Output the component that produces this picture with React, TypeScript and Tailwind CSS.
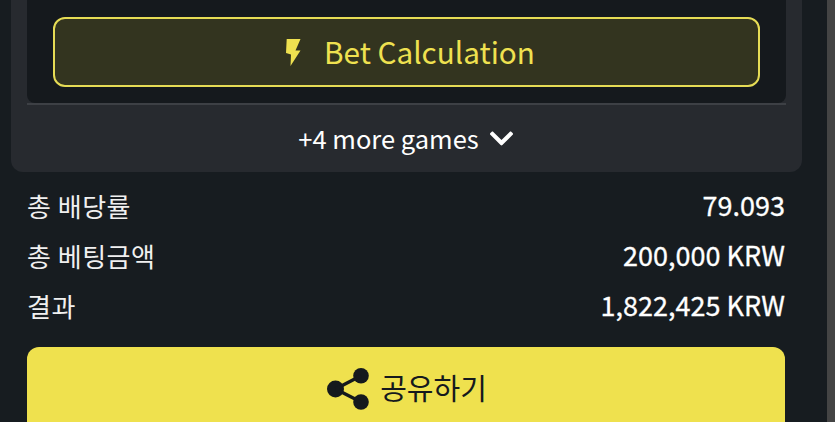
import { FaChevronDown } from 'react-icons/fa';

const font = { fontFamily: '"Noto Sans CJK KR", "Noto Sans", sans-serif' };

const summary = [
  { label: '총 배당률', value: '79.093' },
  { label: '총 베팅금액', value: '200,000 KRW' },
  { label: '결과', value: '1,822,425 KRW' },
];

function BoltIcon() {
  return (
    <svg width="15" height="27" viewBox="0 0 15 27" fill="currentColor" aria-hidden="true">
      <path d="M0.7 0H14.5L9.5 11.5H14.5L4.5 27L5 15.5L0 14Z" />
    </svg>
  );
}

function ShareIcon() {
  return (
    <svg width="42" height="42" viewBox="0 0 42 42" fill="currentColor" aria-hidden="true">
      <circle cx="8.5" cy="21" r="8.5" />
      <circle cx="34" cy="7.8" r="7.8" />
      <circle cx="34" cy="34" r="7.8" />
      <path d="M8.5 21L34 7.8M8.5 21L34 34" stroke="currentColor" strokeWidth="3.5" fill="none" />
    </svg>
  );
}

export default function App() {
  return (
    <div style={font} className="flex h-[422px] w-[835px] overflow-hidden bg-[#171c20]">
      <div className="min-w-0 flex-1">
        <div className="ml-[11px] mr-[25px] h-[172px] rounded-b-xl bg-[#272a2f] px-4">
          <div className="h-[103px] rounded-b-lg bg-[#15191d] px-[26px] pt-[17px]">
            <button className="flex h-[70px] w-full items-center justify-center gap-[23px] rounded-xl border-2 border-[#e6dc55] bg-[#33341f] pl-2 text-[29.7px] text-[#efe150]">
              <BoltIcon />
              Bet Calculation
            </button>
          </div>
          <div className="h-0.5 bg-[#3d4045]" />
          <div className="flex h-[67px] items-center justify-center gap-[9px] text-[25.5px] text-white">
            +4 more games
            <FaChevronDown size={27} />
          </div>
        </div>
        <div className="ml-[27px] mr-[42px] mt-[8px] flex flex-col">
          {summary.map((row) => (
            <div key={row.label} className="flex h-[50px] items-center justify-between text-[26px]">
              <span className="tracking-[0.5px] text-[#f0f0f0]">{row.label}</span>
              <span className="text-[27px] text-white [-webkit-text-stroke:0.3px_white]">{row.value}</span>
            </div>
          ))}
        </div>
        <button className="ml-[27px] mt-[17px] flex h-[90px] w-[758px] items-start justify-center gap-[11px] rounded-xl bg-[#efe14e] pl-[2px] pt-[21px] text-[29px] text-[#15191d]">
          <ShareIcon />
          <span className="-mt-[2px]">공유하기</span>
        </button>
      </div>
      <div className="w-2 shrink-0 bg-[#444444]" />
    </div>
  );
}
